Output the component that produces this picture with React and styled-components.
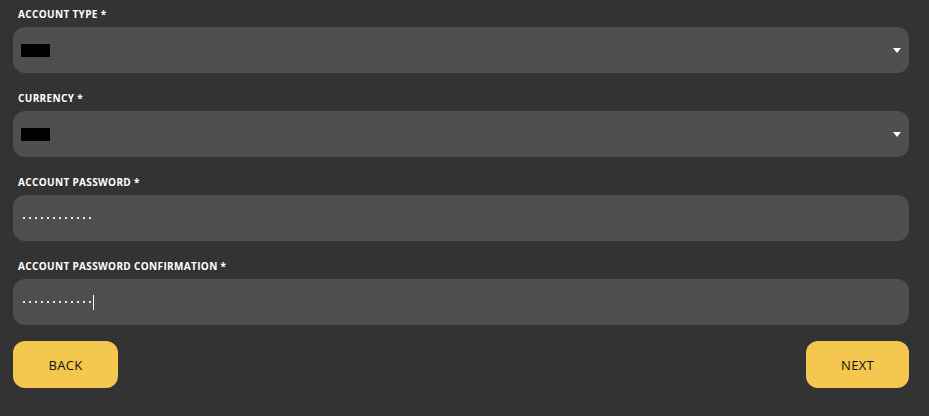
import React from "react";
import styled, {createGlobalStyle} from "styled-components";

const GlobalStyle = createGlobalStyle`
    html, body {
        margin: 0;
        padding: 0;
        background: #333333;
    }
    body {
        font-family: "Open Sans", "Liberation Sans", sans-serif;
    }
`;

const StyledPage = styled.div`
    width: 929px;
    height: 416px;
    box-sizing: border-box;
    padding: 0 20px 0 13px;
    background: #333333;
`;

const StyledField = styled.div`
    display: flex;
    flex-direction: column;
    margin-bottom: 11px;
`;

const StyledLabel = styled.label`
    height: 27px;
    box-sizing: border-box;
    padding: 8px 0 0 5px;
    font-size: 10px;
    font-weight: 700;
    line-height: 12px;
    letter-spacing: 0.35px;
    color: #ffffff;
`;

const StyledBox = styled.div`
    position: relative;
    display: flex;
    align-items: center;
    height: 46px;
    box-sizing: border-box;
    padding: 0 8px;
    border-radius: 12px;
    background: #4f4f4f;
`;

const StyledRedacted = styled.div`
    width: 29px;
    height: 13px;
    background: #000000;
`;

const StyledArrow = styled.div`
    position: absolute;
    right: 8px;
    top: 21px;
    width: 0;
    height: 0;
    border-left: 4px solid transparent;
    border-right: 4px solid transparent;
    border-top: 5px solid #ffffff;
`;

const StyledDots = styled.div`
    display: flex;
    gap: 4px;
    padding-left: 2px;
    align-items: center;
`;

const StyledDot = styled.span`
    width: 2px;
    height: 2px;
    background: #e8e8e8;
`;

const StyledCaret = styled.span`
    width: 1px;
    height: 15px;
    margin-left: -2px;
    background: #ffffff;
`;

const StyledActions = styled.div`
    display: flex;
    justify-content: space-between;
    padding-top: 5px;
`;

const StyledButton = styled.button`
    width: ${props => props.width}px;
    height: 47px;
    border: none;
    border-radius: 12px;
    background: #f4c84f;
    color: #111111;
    font-family: "Open Sans", "Liberation Sans", sans-serif;
    font-size: 13px;
    font-weight: 400;
    letter-spacing: 0.3px;
    cursor: pointer;
`;

const Password = ({caret}) => (
    <StyledDots>
        {Array.from({length: 12}).map((_, i) => <StyledDot key={i} />)}
        {caret ? <StyledCaret /> : null}
    </StyledDots>
);

const App = () => {
    return (
        <StyledPage>
            <GlobalStyle />
            <StyledField>
                <StyledLabel>ACCOUNT TYPE *</StyledLabel>
                <StyledBox>
                    <StyledRedacted />
                    <StyledArrow />
                </StyledBox>
            </StyledField>
            <StyledField>
                <StyledLabel>CURRENCY *</StyledLabel>
                <StyledBox>
                    <StyledRedacted />
                    <StyledArrow />
                </StyledBox>
            </StyledField>
            <StyledField>
                <StyledLabel>ACCOUNT PASSWORD *</StyledLabel>
                <StyledBox>
                    <Password />
                </StyledBox>
            </StyledField>
            <StyledField>
                <StyledLabel>ACCOUNT PASSWORD CONFIRMATION *</StyledLabel>
                <StyledBox>
                    <Password caret />
                </StyledBox>
            </StyledField>
            <StyledActions>
                <StyledButton width={105}>BACK</StyledButton>
                <StyledButton width={103}>NEXT</StyledButton>
            </StyledActions>
        </StyledPage>
    );
};

export default App;
